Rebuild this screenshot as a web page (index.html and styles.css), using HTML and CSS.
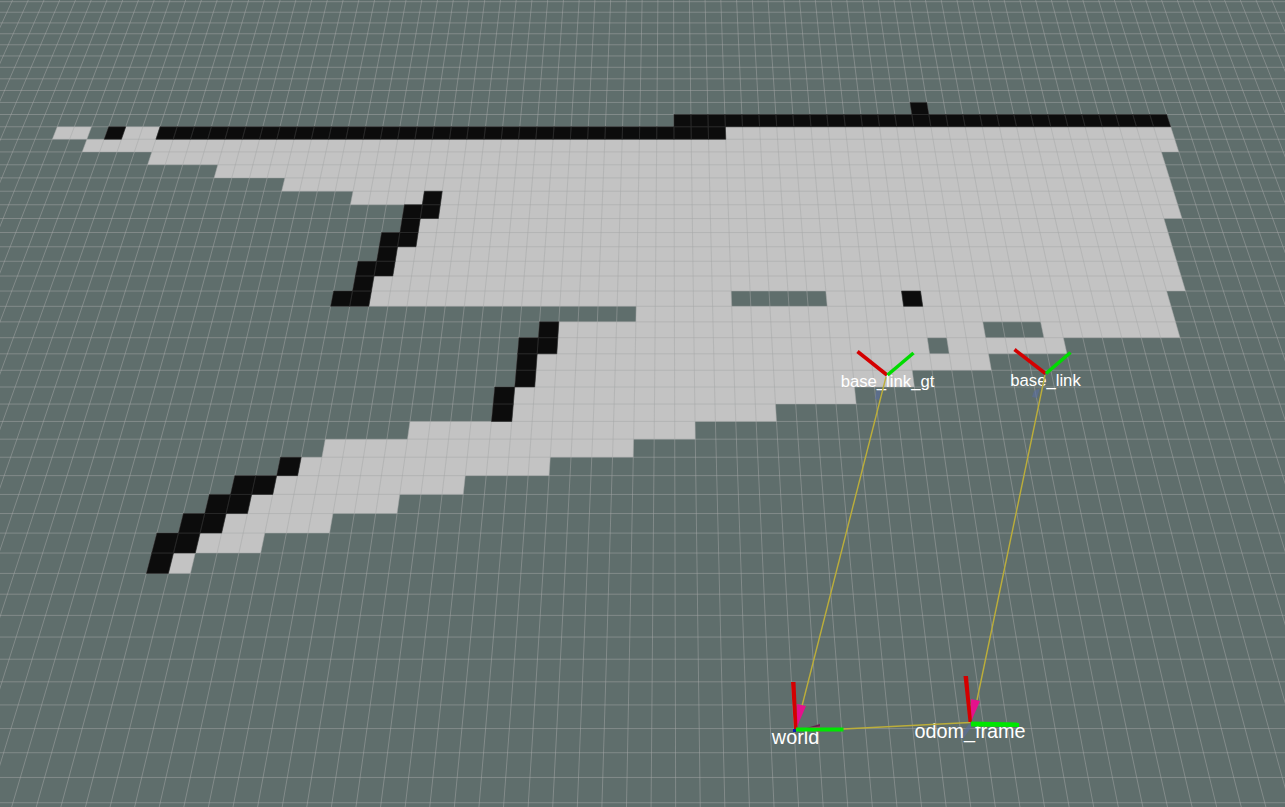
FILE: index.html
```html
<!DOCTYPE html>
<html lang="en">
<head>
    <meta charset="UTF-8">
    <title>Occupancy map</title>
    <link rel="stylesheet" href="styles.css">
</head>
<body>

<svg class="scene" width="1285" height="807" viewBox="0 0 1285 807">
    <path id="freeCells" class="cell-free"></path>
    <path id="gridLines" class="grid-line"></path>
    <path id="wallCells" class="cell-wall"></path>

    <!-- tf frames: labels first, links and axes drawn over them -->
    <polygon class="shade" points="876,391 881,389 879,400 875,399"></polygon>
    <polygon class="shade" points="1034,391 1040,388 1037,398 1032,397"></polygon>
    <polygon class="shade" points="958,738 969,724 972,726 963,739"></polygon>

    <text class="label" x="887.5" y="387">base_link_gt</text>
    <text class="label" x="1045.5" y="386">base_link</text>
    <text class="label label-big" x="795.5" y="743.5">world</text>
    <text class="label label-big" x="970" y="737.5">odom_frame</text>

    <line class="link" x1="886" y1="377" x2="802" y2="706"></line>
    <line class="link" x1="1045" y1="375" x2="977" y2="700"></line>
    <line class="link" x1="843" y1="729" x2="970" y2="722.5"></line>

    <polygon class="arrow" points="797,704 806,706 796.5,728"></polygon>
    <polygon class="arrow" points="806.5,728.5 820,724 820,732.5"></polygon>
    <polygon class="arrow-dark" points="806.5,728 820,724 820,726.5"></polygon>
    <polygon class="arrow" points="971,699 980,701 970.5,723"></polygon>

    <polygon class="axis-x" points="791,682 795.5,682 797.5,729 794,729"></polygon>
    <polygon class="axis-y" points="796,727.5 843.5,727.5 843.5,731.5 796,731.5"></polygon>
    <rect class="axis-z" x="793" y="729" width="3" height="3"></rect>
    <polygon class="axis-x" points="963.5,676 968,676 972,722 968.5,722"></polygon>
    <polygon class="axis-y" points="971,721.5 1019,722.5 1019,727 971,726.5"></polygon>

    <line class="axis-x-line" x1="857.5" y1="351.5" x2="887" y2="375"></line>
    <line class="axis-y-line" x1="887.5" y1="375" x2="913.5" y2="353"></line>
    <line class="axis-x-line" x1="1014.5" y1="349.5" x2="1045.5" y2="373.5"></line>
    <line class="axis-y-line" x1="1046" y1="373.5" x2="1070.5" y2="352.5"></line>
</svg>

<script src="script.js"></script>

</body>
</html>
```

FILE: styles.css
```css
body {
    margin: 0;
    background-color: #5f6e6c;
    overflow: hidden;
}
.scene {
    display: block;
}
.cell-free {
    fill: #c3c3c3;
}
.cell-wall {
    fill: #0c0c0c;
    stroke: #2e2e2e;
    stroke-width: 0.6;
}
.grid-line {
    fill: none;
    stroke: rgba(165, 168, 168, 0.5);
    stroke-width: 1;
}
.label {
    font-family: "Liberation Sans", Arial, sans-serif;
    font-size: 16.7px;
    fill: #ffffff;
    text-anchor: middle;
}
.label-big {
    font-size: 19.8px;
}
.link {
    stroke: #bcae3a;
    stroke-width: 1.4;
}
.arrow {
    fill: #e4118c;
}
.arrow-dark {
    fill: #5a2a4c;
}
.shade {
    fill: rgba(90, 110, 160, 0.6);
}
.axis-x {
    fill: #d40000;
}
.axis-y {
    fill: #00e600;
}
.axis-z {
    fill: #0a1fb0;
}
.axis-x-line {
    stroke: #d40000;
    stroke-width: 3.6;
}
.axis-y-line {
    stroke: #00dc00;
    stroke-width: 3.6;
}
```

FILE: script.js
```js
// Camera projection of the map plane, fitted on the reference
const vanishX = 670;
const horizon = 1435;
const colWidth = 19.1;
const colZero = 61.7;

function rowY(n) {
    const m = n + 11;
    return (1.7 + 10.437 * m) / (1 - 0.007363 * m);
}

function colX(k, y) {
    const scale = (y + horizon) / (306.3 + horizon);
    return vanishX + (colZero + k * colWidth) * scale;
}

// [row, first column, last column]
const freeRuns = [
    [0, -39, -37], [0, -35, -33], [0, 0, 26],
    [1, -37, 26], [2, -33, 25], [3, -29, 25], [4, -25, 25],
    [5, -21, -17], [5, -16, 25], [6, -16, 25],
    [7, -17, 24], [8, -17, 24], [9, -18, 24], [10, -18, 24], [11, -19, 24],
    [12, -19, 0], [12, 5, 9], [12, 10, 23],
    [13, -5, 23],
    [14, -9, 13], [14, 16, 23],
    [15, -9, 10], [15, 11, 17],
    [16, -10, 13], [17, -10, 9], [18, -11, 6], [19, -11, 2],
    [20, -16, -2], [21, -20, -5], [22, -21, -9], [23, -22, -13],
    [24, -23, -16], [25, -24, -19], [26, -25, -22], [27, -26, -25]
];

const wallRuns = [
    [-2, 11, 12], [-1, -3, 26],
    [0, -36, -35], [0, -33, 0],
    [5, -17, -16], [6, -18, -16], [7, -18, -17], [8, -19, -17],
    [9, -19, -18], [10, -20, -18], [11, -20, -19],
    [12, -21, -19], [12, 9, 10],
    [14, -10, -9], [15, -11, -9], [16, -11, -10], [17, -11, -10],
    [18, -12, -11], [19, -12, -11],
    [22, -22, -21], [23, -24, -22], [24, -25, -23], [25, -26, -24],
    [26, -27, -25], [27, -27, -26]
];

function quad(row, from, to) {
    const top = rowY(row);
    const bottom = rowY(row + 1);
    return `M${colX(from, top).toFixed(2)} ${top.toFixed(2)}`
        + `L${colX(to, top).toFixed(2)} ${top.toFixed(2)}`
        + `L${colX(to, bottom).toFixed(2)} ${bottom.toFixed(2)}`
        + `L${colX(from, bottom).toFixed(2)} ${bottom.toFixed(2)}Z`;
}

function runsToPath(runs) {
    return runs.map(([row, from, to]) => quad(row, from, to)).join('');
}

// Walls are outlined cell by cell so the grid still reads through them
function runsToCells(runs) {
    let d = '';
    for (const [row, from, to] of runs) {
        for (let k = from; k < to; k++) {
            d += quad(row, k, k + 1);
        }
    }
    return d;
}

function gridPath() {
    let d = '';
    const top = rowY(-12);
    const bottom = rowY(39);
    for (let n = -12; n <= 39; n++) {
        const y = rowY(n).toFixed(2);
        d += `M-10 ${y}L1295 ${y}`;
    }
    for (let k = -60; k <= 60; k++) {
        d += `M${colX(k, top).toFixed(2)} ${top.toFixed(2)}`;
        d += `L${colX(k, bottom).toFixed(2)} ${bottom.toFixed(2)}`;
    }
    return d;
}

document.getElementById('freeCells').setAttribute('d', runsToPath(freeRuns));
document.getElementById('wallCells').setAttribute('d', runsToCells(wallRuns));
document.getElementById('gridLines').setAttribute('d', gridPath());
```
